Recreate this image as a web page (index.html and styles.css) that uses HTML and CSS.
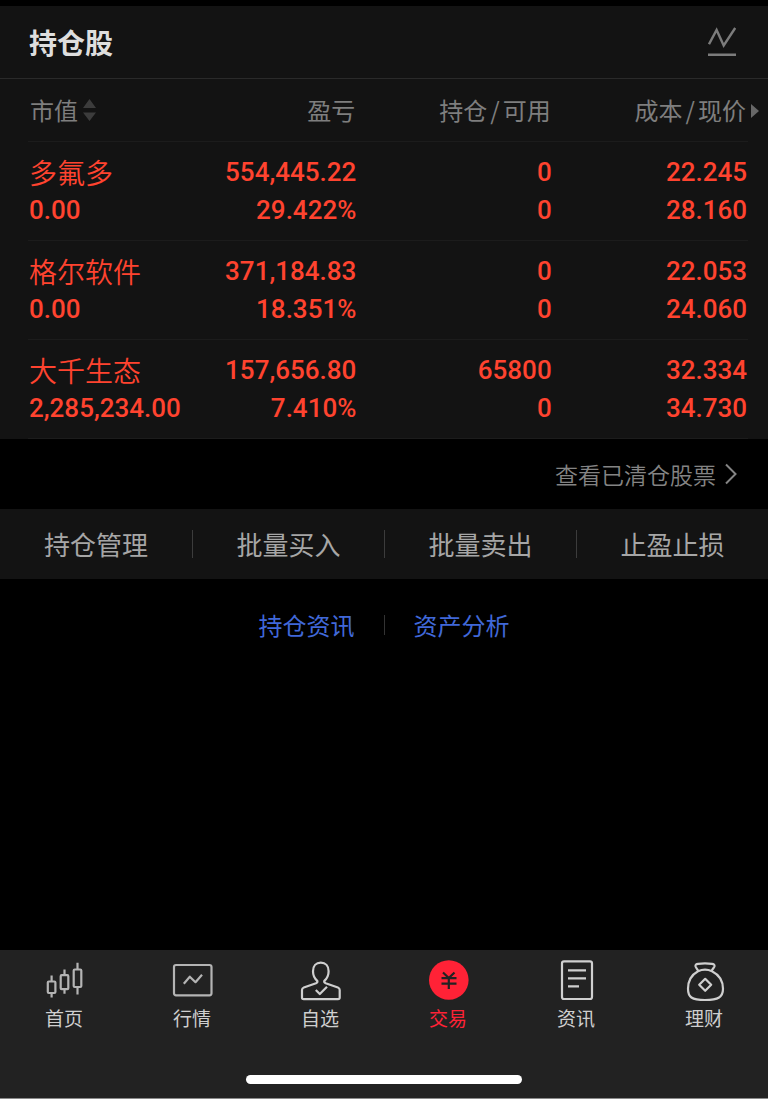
FILE: index.html
```html
<!DOCTYPE html>
<html lang="zh-CN">
<head>
    <meta charset="UTF-8">
    <meta name="viewport" content="width=device-width, initial-scale=1.0">
    <title>持仓股</title>
    <link rel="stylesheet" href="styles.css">
</head>
<body>
    <main class="content">
        <section class="holdings">
            <header class="holdings-header">
                <h1>持仓股</h1>
                <button type="button" class="chart-button" aria-label="走势">
                    <svg width="28" height="30" viewBox="0 0 28 30" fill="none" stroke="currentColor" stroke-width="2.4">
                        <path d="M1 17.2 8.6 3 15.7 18.5 27.2 1M0 27.8h28"/>
                    </svg>
                </button>
            </header>

            <div class="table-wrap">
                <table class="holdings-table">
                    <thead>
                        <tr>
                            <th class="col-name">
                                <button type="button" class="sort-button">市值
                                    <svg width="13" height="24" viewBox="0 0 13 24" fill="currentColor">
                                        <path d="M6.5 1 13 10H0zM6.5 23 0 14.500h13z"/>
                                    </svg>
                                </button>
                            </th>
                            <th class="col-profit">盈亏</th>
                            <th class="col-amount">持仓<span class="slash">/</span>可用</th>
                            <th class="col-price">成本<span class="slash">/</span>现价<i class="more-arrow"></i></th>
                        </tr>
                    </thead>
                    <tbody>
                        <tr>
                            <td><span class="stock">多氟多</span><span>0.00</span></td>
                            <td><span>554,445.22</span><span>29.422%</span></td>
                            <td><span>0</span><span>0</span></td>
                            <td><span>22.245</span><span>28.160</span></td>
                        </tr>
                        <tr>
                            <td><span class="stock">格尔软件</span><span>0.00</span></td>
                            <td><span>371,184.83</span><span>18.351%</span></td>
                            <td><span>0</span><span>0</span></td>
                            <td><span>22.053</span><span>24.060</span></td>
                        </tr>
                        <tr>
                            <td><span class="stock">大千生态</span><span>2,285,234.00</span></td>
                            <td><span>157,656.80</span><span>7.410%</span></td>
                            <td><span>65800</span><span>0</span></td>
                            <td><span>32.334</span><span>34.730</span></td>
                        </tr>
                    </tbody>
                </table>
            </div>
        </section>

        <a href="#" class="cleared-link">查看已清仓股票
            <svg width="12" height="22" viewBox="0 0 12 22" fill="none" stroke="currentColor" stroke-width="2">
                <path d="M1 1.500 10.500 11 1 20.500"/>
            </svg>
        </a>

        <div class="actions">
            <button type="button">持仓管理</button>
            <button type="button">批量买入</button>
            <button type="button">批量卖出</button>
            <button type="button">止盈止损</button>
        </div>

        <div class="links">
            <a href="#">持仓资讯</a>
            <a href="#">资产分析</a>
        </div>
    </main>

    <footer class="bottom">
        <nav class="tabs">
            <a href="#" class="tab">
                <svg class="dim" viewBox="0 0 40 40">
                    <rect x="3.800" y="21.500" width="7.600" height="11.500" rx="1"/>
                    <rect x="16.700" y="15.200" width="7.600" height="14" rx="1"/>
                    <rect x="29.700" y="9.500" width="7.600" height="17.500" rx="1"/>
                    <path d="M7.600 15.500v6M7.600 33v4.500M20.500 9.500v5.700M20.500 29.200v4.500M33.500 2.700v6.800M33.500 27v7.500"/>
                </svg>
                <span>首页</span>
            </a>
            <a href="#" class="tab">
                <svg class="dim" viewBox="0 0 40 40">
                    <rect x="2" y="5" width="37.500" height="30.300" rx="2"/>
                    <path d="M11.800 23.700 17.800 16.700 23.500 22.200 30 14.700"/>
                </svg>
                <span>行情</span>
            </a>
            <a href="#" class="tab">
                <svg viewBox="0 0 40 40">
                    <path d="M17.300 20.800C14.500 18.500 13 15 13 11.200 13 6 16 2.700 20.800 2.700s7.800 3.300 7.800 8.500c0 3.800-1.500 7.300-4.300 9.600-.4 1.300.2 1.900 1.400 2.400l12.200 4.300c1.300.5 1.800 1.300 1.800 2.600v7.400c0 1.200-.5 1.700-1.700 1.700H3.700c-1.200 0-1.700-.5-1.700-1.700v-7.400c0-1.300.5-2.100 1.800-2.600L16 23.200c1.200-.5 1.700-1.100 1.300-2.400z"/>
                    <path d="M15.800 30 19.800 34 27 26.800"/>
                </svg>
                <span>自选</span>
            </a>
            <a href="#" class="tab active">
                <svg viewBox="0 0 40 40">
                    <circle class="coin" cx="20.800" cy="20" r="19.800"/>
                    <path class="yen" d="M15 12.500 20.800 18 26.500 12.500M13.500 18.200h15M13.500 23.600h15M20.800 18v11"/>
                </svg>
                <span>交易</span>
            </a>
            <a href="#" class="tab">
                <svg viewBox="0 0 40 40">
                    <rect x="6" y="1.400" width="30" height="37.600" rx="2"/>
                    <path d="M12 10.400h18M12 18.400h18M12 26.400h11"/>
                </svg>
                <span>资讯</span>
            </a>
            <a href="#" class="tab">
                <svg viewBox="0 0 40 40">
                    <path d="M14.300 10.800C13 8.800 11.800 7.500 11.500 6.300 11.200 4.600 12.300 4 14 3.800c4.500-.6 9.500-.6 14 0 1.700.2 2.800.8 2.500 2.500-.3 1.200-1.700 2.500-3 4.500"/>
                    <path d="M14 11.200c4.500-1.900 9.500-1.900 14 0C34.500 14.500 39 21 39 28.800c0 8.200-4.500 11.200-18 11.200S4 37 4 28.800C4 21 8 14.500 14 11.200z"/>
                    <path d="M21.200 18.800 27.200 24.800 21.200 30.800 15.200 24.800z"/>
                </svg>
                <span>理财</span>
            </a>
        </nav>
        <div class="home-indicator"></div>
    </footer>
</body>
</html>
```
FILE: styles.css
```css
* {
    box-sizing: border-box;
}

body {
    margin: 0;
    min-height: 100vh;
    display: flex;
    flex-direction: column;
    background-color: #000;
    color: #a6a6a6;
    font-family: "Noto Sans CJK SC", sans-serif;
}

a {
    color: inherit;
    text-decoration: none;
}

button {
    padding: 0;
    border: none;
    background: none;
    color: inherit;
    font: inherit;
    cursor: pointer;
}

svg {
    display: block;
}

.content {
    flex: 1;
    padding-top: 6px;
}

/* Holdings */
.holdings {
    background-color: #131313;
}

.holdings-header {
    display: flex;
    justify-content: space-between;
    align-items: center;
    height: 73px;
    padding: 0 32px 0 29px;
    border-bottom: 1px solid #2a2a2a;
}

.holdings-header h1 {
    margin: 0;
    color: #dedede;
    font-size: 28px;
    font-weight: 700;
}

.chart-button {
    color: #7c7c7c;
}

.table-wrap {
    padding: 0 20px 0 28px;
}

.holdings-table {
    width: 100%;
    table-layout: fixed;
    border-collapse: separate;
    border-spacing: 0;
}

.holdings-table th {
    position: relative;
    height: 63px;
    padding: 0 2px;
    border-bottom: 1px solid #1c1c1c;
    color: #7e7e7e;
    font-size: 24px;
    font-weight: 400;
    line-height: 36px;
    text-align: right;
    white-space: nowrap;
}

.col-name {
    width: 22%;
}

.col-profit {
    width: 23.7%;
}

.col-amount,
.col-price {
    width: 27.1%;
}

.sort-button {
    display: flex;
    align-items: center;
    gap: 5px;
}

.sort-button svg {
    color: #3c3c3c;
}

.slash {
    margin: 0 3px;
}

.more-arrow {
    position: absolute;
    right: -11px;
    top: 25px;
    border-left: 8px solid #686868;
    border-top: 7px solid transparent;
    border-bottom: 7px solid transparent;
}

.holdings-table td {
    padding: 11px 1px;
    border-bottom: 1px solid #1c1c1c;
    color: #ff432f;
    font-family: Roboto, "Noto Sans CJK SC", sans-serif;
    font-size: 26px;
    font-weight: 500;
    line-height: 38px;
    text-align: right;
}

.holdings-table td:first-child {
    text-align: left;
}

.holdings-table td span {
    display: block;
    height: 38px;
}

.holdings-table .stock {
    font-family: "Noto Sans CJK SC", sans-serif;
    font-size: 28px;
    font-weight: 350;
}

/* Sold out stocks */
.cleared-link {
    display: flex;
    justify-content: flex-end;
    align-items: center;
    gap: 9px;
    height: 70px;
    padding-right: 31px;
    color: #848484;
    font-size: 23px;
    font-weight: 350;
}

/* Action bar */
.actions {
    display: grid;
    grid-template-columns: repeat(4, 1fr);
    padding: 21px 0;
    background-color: #131313;
}

.actions button {
    height: 28px;
    font-size: 26px;
    line-height: 28px;
}

.actions button + button {
    border-left: 1px solid #3c3c3c;
}

.links {
    display: flex;
    justify-content: center;
    padding-top: 36px;
    color: #4068d8;
    font-size: 24px;
    line-height: 20px;
}

.links a {
    padding: 0 29px;
}

.links a + a {
    border-left: 1px solid #333;
}

/* Bottom tabs */
.bottom {
    background-color: #222;
    border-bottom: 1px solid #8a8a8a;
}

.tabs {
    display: grid;
    grid-template-columns: repeat(6, 1fr);
    padding-top: 10px;
}

.tab {
    display: flex;
    flex-direction: column;
    align-items: center;
    gap: 4px;
    color: #cfcfcf;
    font-size: 19px;
    line-height: 28px;
}

.tab svg {
    width: 40px;
    height: 40px;
    overflow: visible;
    fill: none;
    stroke: currentColor;
    stroke-width: 2.2;
    stroke-linejoin: round;
}

.tab .dim {
    color: #b4b4b4;
}

.tab.active {
    color: #ff2236;
}

.tab .coin {
    fill: currentColor;
    stroke: none;
}

.tab .yen {
    stroke: #222;
}

.home-indicator {
    width: 36%;
    height: 9px;
    margin: 43px auto 14px;
    border-radius: 5px;
    background-color: #fff;
}
```
